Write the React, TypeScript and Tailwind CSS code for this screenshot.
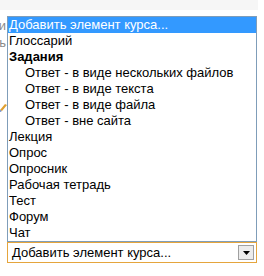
import React from "react";

const items: { label: string; level: number; bold?: boolean; selected?: boolean }[] = [
  { label: "Добавить элемент курса...", level: 0, selected: true },
  { label: "Глоссарий", level: 0 },
  { label: "Задания", level: 0, bold: true },
  { label: "Ответ - в виде нескольких файлов", level: 1 },
  { label: "Ответ - в виде текста", level: 1 },
  { label: "Ответ - в виде файла", level: 1 },
  { label: "Ответ - вне сайта", level: 1 },
  { label: "Лекция", level: 0 },
  { label: "Опрос", level: 0 },
  { label: "Опросник", level: 0 },
  { label: "Рабочая тетрадь", level: 0 },
  { label: "Тест", level: 0 },
  { label: "Форум", level: 0 },
  { label: "Чат", level: 0 },
];

export default function App() {
  return (
    <div
      className="w-[264px] h-[276px] bg-white overflow-hidden text-[13px] text-black"
      style={{ fontFamily: '"Liberation Sans", Arial, sans-serif' }}
    >
      <div className="h-[10px] w-[258px] bg-[#f6f6f6]" />
      <div className="flex mt-[6px]">
        <div className="w-[7px] relative overflow-hidden">
          <div className="absolute right-[1px] top-[2px] text-[#8a8a8a] leading-[16px]">и</div>
          <div className="absolute right-[1px] top-[19px] text-[#8a8a8a] leading-[16px]">ь</div>
          <svg className="absolute left-[0px] top-[86px]" width="7" height="10" viewBox="0 0 7 10">
            <path d="M0 8 L5 2 L7 3 L2 9 Z" fill="#e0a030" />
            <path d="M0 8 L2 9 L0 10 Z" fill="#6080c0" />
          </svg>
        </div>
        <div className="w-[250px]">
          <div className="border border-[#7f9db9] bg-white">
            {items.map((it, i) => (
              <div
                key={i}
                className={`h-[16px] leading-[16px] whitespace-nowrap ${
                  it.selected ? "bg-[#3399ff] text-white" : ""
                } ${it.bold ? "font-bold" : ""} ${it.level === 1 ? "pl-[17px]" : "pl-[1px]"}`}
              >
                {it.label}
              </div>
            ))}
          </div>
          <div className="h-[21px] border border-[#e5a53d] bg-white flex items-center justify-between pl-[4px] pr-[2px]">
            <span className="leading-[16px]">Добавить элемент курса...</span>
            <div className="w-[16px] h-[15px] bg-[#ececec] border border-[#a0a0a0] flex items-center justify-center">
              <svg width="7" height="4" viewBox="0 0 7 4">
                <path d="M0 0 H7 L3.5 4 Z" fill="#000" />
              </svg>
            </div>
          </div>
        </div>
      </div>
    </div>
  );
}
